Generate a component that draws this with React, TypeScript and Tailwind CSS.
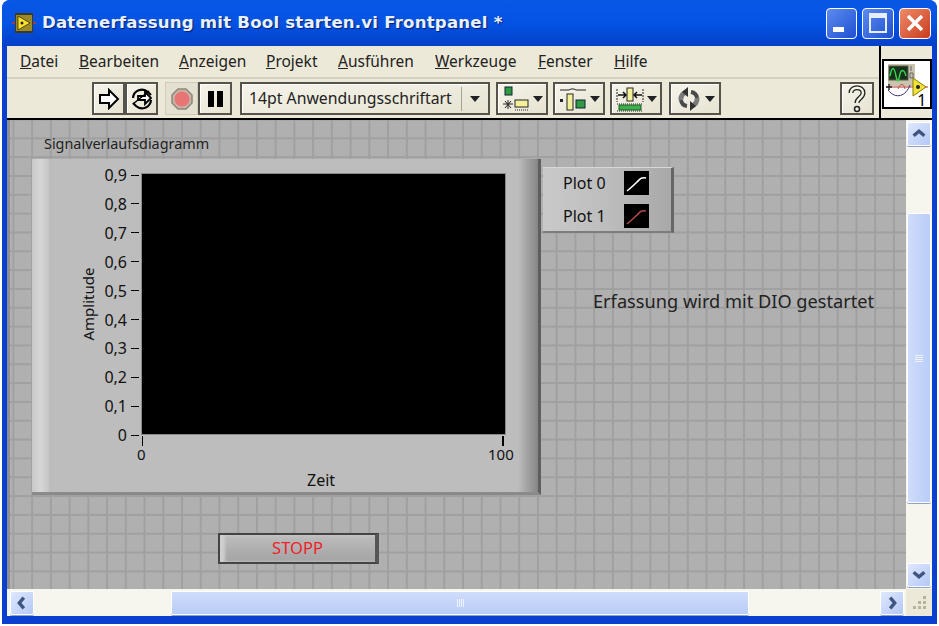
import type { ReactNode } from 'react'

const menus = [
  ['D', 'atei', 'w-[59px]'],
  ['B', 'earbeiten', 'w-[100px]'],
  ['A', 'nzeigen', 'w-[87px]'],
  ['P', 'rojekt', 'w-[72px]'],
  ['A', 'usführen', 'w-[97px]'],
  ['W', 'erkzeuge', 'w-[103px]'],
  ['F', 'enster', 'w-[76px]'],
  ['H', 'ilfe', 'w-[50px]'],
]

const yLabels = ['0,9', '0,8', '0,7', '0,6', '0,5', '0,4', '0,3', '0,2', '0,1', '0']

function ToolButton({ children, className = '' }: { children: ReactNode; className?: string }) {
  return (
    <div
      className={`flex h-[33px] shrink-0 items-center justify-center border-2 border-[#55534a] bg-gradient-to-br from-[#f6f4ea] to-[#e6e3d2] shadow-[inset_1px_1px_0_#fff] ${className}`}
    >
      {children}
    </div>
  )
}

function Caret() {
  return (
    <svg width="10" height="6" viewBox="0 0 10 6">
      <path d="M0 0h10L5 6z" fill="#222" />
    </svg>
  )
}

function ScrollButton({ dir, className = '' }: { dir: 'up' | 'down' | 'left' | 'right'; className?: string }) {
  const d = {
    up: 'M4 12l6-5 6 5',
    down: 'M4 7l6 5 6-5',
    left: 'M12 4l-5 6 5 6',
    right: 'M8 4l5 6-5 6',
  }[dir]
  return (
    <div
      className={`flex h-[24px] w-[24px] shrink-0 items-center justify-center rounded-[2px] border border-white bg-gradient-to-br from-[#dfe8fd] to-[#b4c8f6] shadow-[0_1px_0_#8ea2c8] ${className}`}
    >
      <svg width="18" height="18" viewBox="0 0 20 20">
        <path d={d} fill="none" stroke="#3f5580" strokeWidth="3.800" />
      </svg>
    </div>
  )
}

function Swatch({ color, className = '' }: { color: string; className?: string }) {
  return (
    <div className={`h-[24px] w-[25px] bg-black ${className}`}>
      <svg width="25" height="24" viewBox="0 0 25 24">
        <path d="M3 20C8 16 10 14 13 11S17 6 22 7" fill="none" stroke={color} strokeWidth="1.600" />
      </svg>
    </div>
  )
}

export default function App() {
  return (
    <div
      className="relative h-[626px] w-[939px] overflow-hidden bg-white text-black"
      style={{ fontFamily: '"DejaVu Sans", sans-serif' }}
    >
      <div className="absolute inset-x-[2px] bottom-[2px] top-0 flex flex-col rounded-t-[8px] bg-[#0b3fd0]">
        {/* Title bar */}
        <div className="flex h-[46px] shrink-0 items-center rounded-t-[8px] bg-gradient-to-b from-[#0a57e6] via-[#0453e4] to-[#0340c8] pl-[10px] pr-[6px]">
          <svg width="24" height="22" viewBox="0 0 24 22" className="shrink-0">
            <path d="M0 11h24" stroke="#d03030" strokeWidth="1.500" />
            <rect x="3" y="1" width="18" height="20" fill="#3c3a26" />
            <rect x="4" y="3" width="16" height="16" fill="#9a8a2a" />
            <path d="M6 4l12 7-12 7z" fill="#fbe22e" stroke="#3a3000" strokeWidth="0.800" />
            <circle cx="10" cy="11" r="1.500" fill="#222" />
          </svg>
          <span className="ml-[6px] whitespace-nowrap text-[16.600px] font-bold leading-none tracking-[0.2px] text-[#e8f1ff] [text-shadow:1px_1px_1px_#0a1f70]">
            Datenerfassung mit Bool starten.vi Frontpanel *
          </span>
          <div className="ml-auto flex gap-[5px]">
            <div className="relative h-[31px] w-[31px] rounded-[4px] border border-white bg-gradient-to-br from-[#5d8bf0] to-[#1f4fd0]">
              <div className="absolute bottom-[6px] left-[6px] h-[5px] w-[11px] bg-white" />
            </div>
            <div className="flex h-[31px] w-[32px] items-center justify-center rounded-[4px] border border-white bg-gradient-to-br from-[#5d8bf0] to-[#1f4fd0]">
              <div className="h-[20px] w-[18px] border-2 border-t-[5px] border-[#e6eeff]" />
            </div>
            <div className="flex h-[31px] w-[32px] items-center justify-center rounded-[4px] border border-white bg-gradient-to-br from-[#ee8a68] to-[#c8391a]">
              <svg width="20" height="20" viewBox="0 0 20 20">
                <path d="M3 3l14 14M17 3L3 17" stroke="#fff" strokeWidth="3.500" />
              </svg>
            </div>
          </div>
        </div>

        {/* Client area */}
        <div className="mx-[5px] mb-[8px] flex min-h-0 flex-1 flex-col bg-[#a9a9a9]">
          <div className="flex h-[74px] shrink-0 border-b-2 border-black bg-[#ece9d8]">
            <div className="flex min-w-0 flex-1 flex-col">
              <div className="flex h-[33px] shrink-0 items-center border-b-2 border-[#d4d0c0] pl-[13px] text-[15.500px]" style={{ fontFamily: '"Noto Sans", sans-serif' }}>
                {menus.map(([key, rest, width], i) => (
                  <span key={i} className={`whitespace-nowrap text-[#222] ${width}`}>
                    <span className="underline">{key}</span>
                    {rest}
                  </span>
                ))}
              </div>
              <div className="flex flex-1 items-center pl-[85px]">
                <ToolButton className="w-[33px]">
                  <svg width="22" height="22" viewBox="0 0 22 22">
                    <path d="M2 7h9V2l9 9-9 9v-5H2z" fill="#fff" stroke="#000" strokeWidth="2" />
                  </svg>
                </ToolButton>
                <ToolButton className="w-[33px]">
                  <svg width="26" height="26" viewBox="0 0 26 26" fill="none" stroke="#000" strokeWidth="2.200">
                    <path d="M4 12a9 9 0 0 1 15-6l3 3M22 14a9 9 0 0 1-15 6l-3-3" />
                    <path d="M9 10h7V6l6 6-6 6v-4H9z" fill="#fff" strokeWidth="1.800" />
                    <path d="M4 18L20 5" strokeWidth="1.500" />
                  </svg>
                </ToolButton>
                <div className="ml-[7px] flex h-[33px] w-[33px] shrink-0 items-center justify-center border border-[#cfccbc] bg-[#e4e1d2]">
                  <svg width="24" height="24" viewBox="0 0 24 24">
                    <path d="M8 2h8l6 6v8l-6 6H8l-6-6V8z" fill="#c9b3a5" stroke="#8f8679" strokeWidth="1.500" />
                    <circle cx="12" cy="12" r="7.500" fill="#e87474" />
                  </svg>
                </div>
                <ToolButton className="w-[34px]">
                  <div className="flex gap-[3px]">
                    <div className="h-[16px] w-[6px] bg-black" />
                    <div className="h-[16px] w-[6px] bg-black" />
                  </div>
                </ToolButton>
                <ToolButton className="ml-[8px] w-[250px] justify-start pl-[7px]">
                  <span className="w-[212px] whitespace-nowrap text-[15.800px] text-[#222]" style={{ fontFamily: '"Noto Sans", sans-serif' }}>
                    14pt Anwendungsschriftart
                  </span>
                  <div className="flex h-[24px] flex-1 items-center justify-center border-l border-[#a8a598]">
                    <Caret />
                  </div>
                </ToolButton>
                <ToolButton className="ml-[6px] w-[52px] gap-[3px]">
                  <svg width="28" height="26" viewBox="0 0 28 26">
                    <rect x="3" y="1" width="7" height="8" fill="#2f9a43" stroke="#123" />
                    <path d="M1 18h10M6 14v9M3 15l6 7M9 15l-6 7" stroke="#222" />
                    <rect x="13" y="14" width="13" height="7" fill="#f5f19a" stroke="#222" />
                    <path d="M13 24h13" stroke="#222" strokeDasharray="1 1" />
                  </svg>
                  <Caret />
                </ToolButton>
                <ToolButton className="ml-[5px] w-[52px] gap-[3px]">
                  <svg width="28" height="26" viewBox="0 0 28 26">
                    <path d="M1 4h9l2-1h3l2 1h10" fill="none" stroke="#222" />
                    <rect x="1" y="13" width="3" height="3" fill="#222" />
                    <rect x="8" y="8" width="6" height="16" fill="#f5f19a" stroke="#222" />
                    <rect x="17" y="14" width="9" height="8" fill="#2f9a43" stroke="#123" />
                  </svg>
                  <Caret />
                </ToolButton>
                <ToolButton className="ml-[5px] w-[52px] gap-[3px]">
                  <svg width="28" height="26" viewBox="0 0 28 26">
                    <path d="M1 3v13M27 3v13" stroke="#222" strokeDasharray="2 1" />
                    <path d="M2 9h8M18 9h8M7 6l3 3-3 3M21 6l-3 3 3 3" fill="none" stroke="#111" strokeWidth="1.500" />
                    <rect x="11" y="2" width="6" height="13" fill="#f5f19a" stroke="#222" />
                    <path d="M1 18h26M1 25h26" stroke="#222" strokeDasharray="1 1" />
                    <rect x="3" y="19" width="22" height="5" fill="#3fae4c" stroke="#1b5a25" />
                  </svg>
                  <Caret />
                </ToolButton>
                <ToolButton className="ml-[7px] w-[52px] gap-[3px]">
                  <svg width="26" height="26" viewBox="0 0 26 26" fill="none" stroke="#7a7a7a" strokeWidth="5">
                    <path d="M11 6a7 7 0 0 0-6 8M15 20a7 7 0 0 0 6-8" />
                    <path d="M12 1v10L6 6zM14 15v10l6-5z" fill="#333" stroke="none" />
                    <path d="M15 6a7 7 0 0 1 6 6M11 20a7 7 0 0 1-6-6" stroke="#4a4a4a" strokeWidth="4" />
                  </svg>
                  <Caret />
                </ToolButton>
                <ToolButton className="ml-[119px] w-[34px]">
                  <svg width="20" height="28" viewBox="0 0 20 28" fill="none">
                    <path d="M4 8c0-7 12-7 12 0 0 5-6 5-6 10" stroke="#222" strokeWidth="5" />
                    <path d="M4 8c0-7 12-7 12 0 0 5-6 5-6 10" stroke="#f4f2e4" strokeWidth="2.400" />
                    <circle cx="10" cy="24" r="2.500" fill="#f4f2e4" stroke="#222" strokeWidth="1.500" />
                  </svg>
                </ToolButton>
              </div>
            </div>
            {/* VI icon */}
            <div className="flex w-[53px] shrink-0 items-center justify-center border-l-2 border-black">
              <div className="relative mt-[4px] h-[50px] w-[50px] border-2 border-black bg-white">
                <svg width="46" height="38" viewBox="0 0 46 38" className="absolute left-0 top-[2px]">
                  <rect x="4" y="1" width="27" height="22" fill="#c9c4ae" />
                  <rect x="5" y="3" width="19" height="14" fill="#16301a" stroke="#5a5a4a" />
                  <path d="M6 13c2-10 4-10 6 0s3 2 4-2 4-6 6 2" fill="none" stroke="#39d353" strokeWidth="1.400" />
                  <path d="M27 3v5M26 10h3v5h-3z" fill="none" stroke="#666" />
                  <path d="M2 24h42" stroke="#b03030" />
                  <path d="M5 21v6M2 24h6" stroke="#222" strokeWidth="1.400" />
                  <path d="M4 27c8 10 18 6 22-5" fill="none" stroke="#3b2a7a" />
                  <path d="M14 26c2-6 6-6 7 0" fill="none" stroke="#c05040" />
                  <path d="M29 15l13 9-13 9z" fill="#f0e33a" stroke="#8a7a00" />
                  <circle cx="34" cy="24" r="2" fill="#222" />
                </svg>
                <span className="absolute bottom-[-1px] right-[3px] text-[16px] leading-none" style={{ fontFamily: '"Noto Sans", sans-serif' }}>
                  1
                </span>
              </div>
            </div>
          </div>

          <div className="flex min-h-0 flex-1 flex-col">
            <div className="flex min-h-0 flex-1">
              {/* Front panel canvas */}
              <div className="relative min-w-0 flex-1 overflow-hidden border-l-[3px] border-[#8e8e8e] bg-[#b0b0b0] bg-[linear-gradient(#a0a0a0_1.500px,transparent_1.500px),linear-gradient(90deg,#a0a0a0_1.500px,transparent_1.500px)] bg-[size:18.740px_18.830px] bg-[position:2.400px_-1.500px]" style={{ fontFamily: '"Noto Sans", sans-serif' }}>
                <span className="absolute left-[34px] top-[17px] whitespace-nowrap text-[14.400px] leading-none text-[#222]">Signalverlaufsdiagramm</span>

                {/* Chart */}
                <div className="absolute left-[22px] top-[39px] h-[336px] w-[509px] border-b-[3px] border-r-[3px] border-b-[#8a8a8a] border-r-[#5e5e5e] bg-[#bdbdbd]">
                  <div className="absolute inset-y-0 left-0 w-[17px] bg-gradient-to-r from-[#c8c8c8] via-[#d6d6d6] to-[#c6c6c6]" />
                  <div className="absolute inset-y-0 right-0 w-[20px] bg-gradient-to-r from-[#bdbdbd] to-[#858585]" />
                  <div className="absolute left-[110px] top-[15px] h-[260px] w-[363px] bg-black shadow-[0_0_0_1px_#8a8a8a]" />
                  {yLabels.map((label, i) => (
                    <div key={label} className="absolute right-[399px] flex items-center gap-[4px] text-[16px] leading-none text-[#111]" style={{ top: 8 + i * 28.9 }}>
                      <span>{label}</span>
                      <div className="h-px w-[8px] bg-black" />
                    </div>
                  ))}
                  <span className="absolute left-[56px] top-[145px] origin-center -rotate-90 whitespace-nowrap text-[15px] leading-none text-[#111] [width:0] [text-indent:-29px]">Amplitude</span>
                  <div className="absolute left-[110px] top-[277px] h-[10px] w-px bg-black" />
                  <div className="absolute left-[470px] top-[277px] h-[10px] w-[2px] bg-black" />
                  <span className="absolute left-[105px] top-[288px] text-[15px] leading-none text-[#111]">0</span>
                  <span className="absolute left-[456px] top-[288px] text-[15px] leading-none text-[#111]">100</span>
                  <span className="absolute left-[275px] top-[313px] text-[16px] leading-none text-[#111]">Zeit</span>
                </div>

                {/* Legend */}
                <div className="absolute left-[533px] top-[47px] flex h-[66px] w-[131px] flex-col gap-[9px] border-b-2 border-r-[3px] border-b-[#7d7d7d] border-r-[#666] border-t border-t-[#d8d8d8] bg-gradient-to-r from-[#c9c9c9] via-[#bdbdbd] to-[#a8a8a8] pt-[3px] pl-[20px] text-[16px] text-[#111]">
                  <div className="flex h-[24px] items-center justify-between pr-[22px]">
                    <span>Plot 0</span>
                    <Swatch color="#fff" />
                  </div>
                  <div className="flex h-[24px] items-center justify-between pr-[22px]">
                    <span>Plot 1</span>
                    <Swatch color="#b04a4a" />
                  </div>
                </div>

                <span className="absolute left-[583px] top-[172px] whitespace-nowrap text-[18.200px] leading-none text-[#222]">Erfassung wird mit DIO gestartet</span>

                {/* Stop button */}
                <div className="absolute left-[208px] top-[413px] flex h-[31px] w-[161px] items-center justify-center border-2 border-[#444] border-r-[4px] border-r-[#555] bg-gradient-to-b from-[#bdbdbd] to-[#a3a3a3] text-[16.500px] text-[#f0202a] shadow-[inset_5px_0_3px_#cfcfcf]">
                  STOPP
                </div>
              </div>

              {/* Vertical scrollbar */}
              <div className="flex w-[26px] shrink-0 flex-col items-center bg-[#f7f6ee] py-[2px]">
                <ScrollButton dir="up" />
                <div className="mt-[67px] flex h-[290px] w-[24px] shrink-0 items-center justify-center rounded-[2px] border border-white bg-gradient-to-r from-[#cfdcfb] to-[#b9cdf8] shadow-[0_1px_0_#8ea2c8]">
                  <div className="flex flex-col gap-px">
                    {[0, 1, 2, 3].map((i) => (
                      <div key={i} className="h-px w-[8px] bg-[#eef3ff]" />
                    ))}
                  </div>
                </div>
                <ScrollButton dir="down" className="mt-auto" />
              </div>
            </div>

            {/* Horizontal scrollbar */}
            <div className="flex h-[27px] shrink-0 items-center bg-[#f7f6ee] pl-[3px]">
              <ScrollButton dir="left" />
              <div className="ml-[137px] flex h-[24px] w-[578px] shrink-0 items-center justify-center rounded-[2px] border border-white bg-gradient-to-b from-[#cfdcfb] to-[#b9cdf8] shadow-[0_1px_0_#8ea2c8]">
                <div className="flex gap-px">
                  {[0, 1, 2, 3].map((i) => (
                    <div key={i} className="h-[8px] w-px bg-[#eef3ff]" />
                  ))}
                </div>
              </div>
              <ScrollButton dir="right" className="ml-auto mr-[2px]" />
              <div className="flex h-full w-[26px] shrink-0 items-center justify-center bg-[#ece9d8]">
                <svg width="18" height="18" viewBox="0 0 18 18" fill="#b7b39f">
                  <rect x="13" y="2" width="3" height="3" />
                  <rect x="8" y="7" width="3" height="3" />
                  <rect x="13" y="7" width="3" height="3" />
                  <rect x="3" y="12" width="3" height="3" />
                  <rect x="8" y="12" width="3" height="3" />
                  <rect x="13" y="12" width="3" height="3" />
                </svg>
              </div>
            </div>
          </div>
        </div>
      </div>
    </div>
  )
}
